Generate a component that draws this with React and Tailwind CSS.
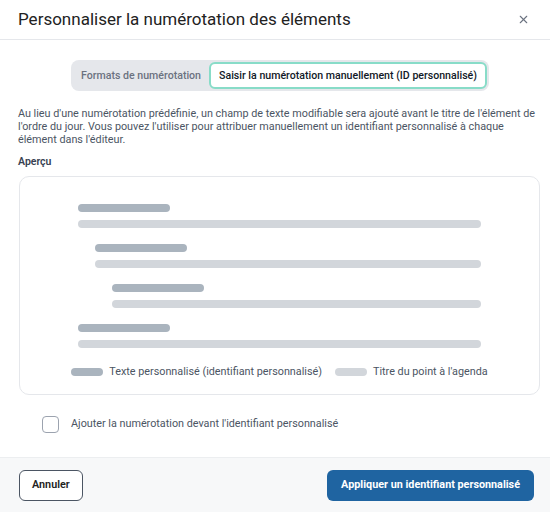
import { X } from "lucide-react"

const rows = [0, 17, 34, 0]

export default function App() {
  return (
    <div className="w-[550px] h-[512px] overflow-hidden bg-white font-['Roboto',sans-serif]">
      <div className="w-[560px] h-[512px] flex flex-col bg-white rounded-lg">
        {/* Header */}
        <div className="h-10 shrink-0 flex items-center justify-between pl-[18px] pr-[30px] border-b border-[#e5e7eb]">
          <h2 className="text-[17px] text-[#222] leading-none">Personnaliser la numérotation des éléments</h2>
          <X className="w-[13px] h-[13px] text-[#6b7280]" strokeWidth={2} />
        </div>

        {/* Body */}
        <div className="flex-1 flex flex-col px-5 pt-5">
          <div className="flex justify-center">
            <div className="flex items-center h-[31px] p-[2px] rounded-lg bg-[#e5e7eb]">
              <button className="h-full px-[8px] text-[10.6px] font-medium text-[#6b7280]">Formats de numérotation</button>
              <button className="h-[27px] px-[8px] rounded-md bg-white border-2 border-[#88dcc8] text-[10.6px] font-medium text-[#111827]">
                Saisir la numérotation manuellement (ID personnalisé)
              </button>
            </div>
          </div>

          <p className="mt-[16px] -ml-[2px] text-[10.8px] leading-[13px] text-[#4b5563]">
            Au lieu d'une numérotation prédéfinie, un champ de texte modifiable sera ajouté avant le titre de l'élément de l'ordre du jour. Vous pouvez l'utiliser pour attribuer manuellement un identifiant personnalisé à chaque élément dans l'éditeur.
          </p>

          <p className="mt-[9px] -ml-[2px] text-[10.5px] font-semibold text-[#374151] leading-[14px]">Aperçu</p>

          <div className="mt-[7px] -ml-[1px] h-[219px] rounded-[10px] border border-[#e5e7eb] pt-[27px] px-[58px] flex flex-col">
            {rows.map((indent, i) => (
              <div key={i} className="flex flex-col gap-2 mb-4" style={{ paddingLeft: indent }}>
                <div className="w-[92px] h-2 rounded-full bg-[#aab4be]" />
                <div className="h-2 rounded-full bg-[#d2d6db]" />
              </div>
            ))}
            <div className="mt-[1px] -mx-[10px] flex items-center justify-center gap-[13px] whitespace-nowrap text-[10.8px] text-[#4b5563] leading-[14px]">
              <div className="flex items-center gap-[6px]">
                <span className="w-8 h-2 shrink-0 rounded-full bg-[#aab4be]" />
                <span>Texte personnalisé (identifiant personnalisé)</span>
              </div>
              <div className="flex items-center gap-[6px]">
                <span className="w-8 h-2 shrink-0 rounded-full bg-[#d2d6db]" />
                <span>Titre du point à l'agenda</span>
              </div>
            </div>
          </div>

          <label className="mt-[21px] ml-[22px] flex items-center gap-[12px]">
            <span className="w-[17px] h-[17px] rounded-[4px] border border-[#9ca3af] bg-white" />
            <span className="text-[10.8px] text-[#4b5563]">Ajouter la numérotation devant l'identifiant personnalisé</span>
          </label>
        </div>

        {/* Footer */}
        <div className="h-[55px] shrink-0 flex items-center justify-between pl-[19px] pr-[26px] bg-[#f7f8f9] border-t border-[#eceef0]">
          <button className="h-[31px] px-3 rounded-md border border-[#4b5563] bg-white text-[10.8px] font-semibold text-[#222]">Annuler</button>
          <button className="h-[31px] px-[14px] rounded-md bg-[#1f64a1] text-[10.8px] font-bold text-white">Appliquer un identifiant personnalisé</button>
        </div>
      </div>
    </div>
  )
}
